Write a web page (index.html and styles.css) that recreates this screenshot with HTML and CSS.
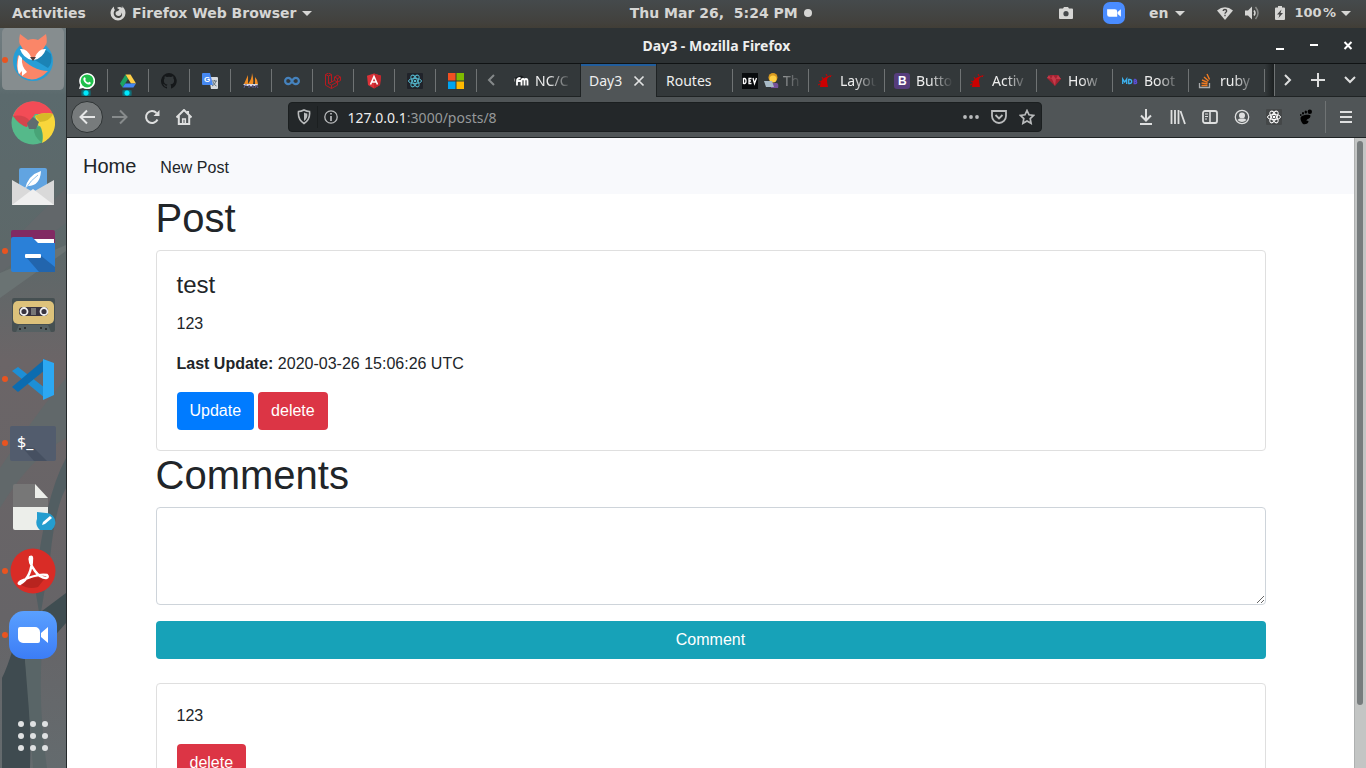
FILE: index.html
```html
<!DOCTYPE html>
<html lang="en">
<head>
<meta charset="utf-8">
<title>Day3</title>
<link rel="stylesheet" href="styles.css">
</head>
<body>
<header class="topbar">
  <div class="topbar-left">
    <button class="top-btn">Activities</button>
    <button class="top-btn app-menu">
      <svg width="16" height="16" viewBox="0 0 16 16"><path d="M4 1.500C2 3 .5 5 .5 8a7.500 7.500 0 0 0 15 0c0-3-1.500-5.500-4-7 .8 1 1 1.500 1 2C10.500 1.500 8 1.500 7 3l2.500 1.500L8 6c-1.500 0-2.500 1-2.500 2.300C5.500 10 7 11 8.500 11c2 0 3.300-1.500 3-3.500 1 1.200.8 3-.3 4.200C9.500 13.500 6 13.300 4.500 11 3 8.500 3.800 6 5 5 4 4 3.800 2.500 4 1.500z" fill="#d6d6d4"/></svg>
      <span>Firefox Web Browser</span><i class="caret"></i>
    </button>
  </div>
  <button class="top-btn clock"><span>Thu Mar 26,&nbsp; 5:24 PM</span><i class="dot"></i></button>
  <div class="topbar-right">
    <svg class="tray-camera" width="14" height="12" viewBox="0 0 14 12"><path d="M1 1.500h3L5 0h4l1 1.500h3q1 0 1 1V11q0 1-1 1H1q-1 0-1-1V2.500q0-1 1-1z" fill="#d6d6d4"/><circle cx="7" cy="6.700" r="2.600" fill="#45484a"/></svg>
    <svg class="tray-zoom" width="22" height="22" viewBox="0 0 48 48"><rect width="48" height="48" rx="15" fill="#4a8cff"/><path d="M9 16h17a5 5 0 0 1 5 5v11H14a5 5 0 0 1-5-5zM32 22l7-6v16l-7-6z" fill="#fff"/></svg>
    <button class="top-btn lang">en<i class="caret"></i></button>
    <button class="top-btn system" aria-label="System menu">
      <svg width="16" height="13" viewBox="0 0 16 13"><path d="M0 3.500Q8-3 16 3.500L8 13z" fill="#d6d6d4"/><path d="M6.200 4c0-2 3.500-2 3.500 0 0 1.200-1.700 1.200-1.700 2.700M8 7.800v1.500" stroke="#444" stroke-width="1.300" fill="none"/></svg>
      <svg class="volume" width="16" height="14" viewBox="0 0 16 14"><path d="M0 4.500h3L7 .5v13l-4-4H0z" fill="#d6d6d4"/><path d="M9 4.500q2 2.500 0 5" stroke="#d6d6d4" stroke-width="1.500" fill="none"/><path d="M10.500 1q5 6 0 12" stroke="#888a88" stroke-width="1.500" fill="none"/></svg>
      <svg width="10" height="14" viewBox="0 0 10 14"><path d="M3 0h4v1.500h2q1 0 1 1V13q0 1-1 1H1q-1 0-1-1V2.500q0-1 1-1h2z" fill="#d6d6d4"/><path d="M6.500 3.500L2 8.500h2.500L3.500 12 8 7H5.500z" fill="#444"/></svg>
      <span class="percent">100&#8202;%</span><i class="caret"></i>
    </button>
  </div>
</header>
<div class="desktop">
  <aside class="dock">
    <svg class="wallpaper" viewBox="0 0 66 740" preserveAspectRatio="none">
      <defs><linearGradient id="wall" x1="0" y1="0" x2="0" y2="1"><stop offset="0" stop-color="#707c80"/><stop offset=".06" stop-color="#697679"/><stop offset=".09" stop-color="#5b6a6d"/><stop offset=".3" stop-color="#5d6869"/><stop offset=".45" stop-color="#6b6567"/><stop offset=".8" stop-color="#666467"/><stop offset="1" stop-color="#646b6e"/></linearGradient></defs>
      <rect width="66" height="740" fill="url(#wall)"/>
      <path d="M66 160L0 225v20l66-50z" fill="#62676a"/><path d="M0 245L66 217v6L0 270z" fill="#6a7373"/>
      <path d="M66 350Q40 380 0 440v40q30-50 66-70z" fill="#61686a"/>
      <path d="M66 430Q44 470 35 560l5 30 10-60q5-50 16-70z" fill="#525e62"/>
      <path d="M42 583L66 565v30L44 620z" fill="#3f4d51"/>
      <path d="M22 585Q12 630 2 650V740h28q2-70-8-130z" fill="#3f4b50"/>
      <path d="M24 620h18q-4 60 5 120H33q-4-60-9-120z" fill="#596567"/>
    </svg>
    <nav class="dock-list">
      <button class="dock-item active running" aria-label="Firefox"><svg width="40" height="48" viewBox="0 0 40 48"><circle cx="20" cy="28" r="20" fill="#279ed6"/><path d="M29 14l9 7q2 9-3 14L20 26z" fill="#1b83b5"/><path d="M5 22Q1 40 10 44q13 7 25-6Q20 38 5 22z" fill="#fa8668"/><path d="M6 22q-3 12 0 19l3-3v5l5-4q-6-6-5-14z" fill="#fff"/><path d="M7 1l8 6q5-2 10 0l8-6q2 9-1 12-4 8-12 14-8-6-12-14Q5 10 7 1z" fill="#fa8668"/><path d="M7 16q7-1 11 8l1 3q-9-2-12-11zM33 16q-7-1-11 8l-1 3q9-2 12-11z" fill="#fff"/><path d="M17 24h6l-3 4z" fill="#543c3a"/></svg></button>
      <button class="dock-item" aria-label="Chrome"><svg width="44" height="44" viewBox="0 0 44 44"><circle cx="22" cy="22" r="21.500" fill="#55b98a"/><path d="M2 15A21.500 21.500 0 0 1 42 13H24L15 26Q8 18 2 15z" fill="#f34c56"/><path d="M42 13A21.500 21.500 0 0 1 31 42q2-10-3-16l-4-11q9-5 18-2z" fill="#f8d63b"/><path d="M2 15q11-2 17 5l-3 6Q8 24 2 15z" fill="#d5444c"/><path d="M24 15q9-5 18-2-3 7-13 8z" fill="#d7b927"/><path d="M31 42q-9-7-8-15l6-2q4 6 2 17z" fill="#48a477"/><path d="M22 16l6 5-3 7h-7l-2-6z" fill="#606c70"/></svg></button>
      <button class="dock-item" aria-label="Mail"><svg width="44" height="38" viewBox="0 0 44 38"><rect x="8" width="28" height="25" rx="2" fill="#61a4e1"/><path d="M14 21q3-14 16-18-1 15-13 15z" fill="#fff"/><path d="M15 20Q20 12 27 7" stroke="#8ec0ea" fill="none"/><path d="M1 12l21 12 21-12v25H1z" fill="#d9d9d9"/><path d="M1 37l21-16 21 16z" fill="#efefef"/></svg></button>
      <button class="dock-item running" aria-label="Files"><svg width="46" height="42" viewBox="0 0 46 42"><rect x="1" width="44" height="22" rx="2" fill="#812a63"/><path d="M20 9h24v6H20z" fill="#fff"/><path d="M1 9q0-2 2-2h19l6 6h17v27q0 2-2 2H3q-2 0-2-2z" fill="#2a80d8"/><path d="M16 27l14-2 15 12v5H29z" fill="#2265ad"/><rect x="15" y="24" width="16" height="4" rx="1" fill="#fff"/></svg></button>
      <button class="dock-item" aria-label="Cassette"><svg width="44" height="34" viewBox="0 0 44 34"><rect x="1" width="43" height="34" rx="2" fill="#465052"/><rect x="2" y="3" width="41" height="23" rx="5" fill="#ddc27b"/><rect x="8" y="9" width="29" height="9" rx="4" fill="#383440"/><path d="M20 10h5v7h-5z" fill="#777"/><circle cx="13" cy="13.500" r="3.500" fill="#383440" stroke="#eee" stroke-width="1.800"/><circle cx="33" cy="13.500" r="3.500" fill="#383440" stroke="#eee" stroke-width="1.800"/><path d="M8 27h29l3 7H5z" fill="#566163"/><g fill="#222"><circle cx="9" cy="31" r="1"/><circle cx="14" cy="30" r="1"/><circle cx="30" cy="30" r="1"/><circle cx="35" cy="31" r="1"/></g></svg></button>
      <button class="dock-item running" aria-label="Visual Studio Code"><svg width="44" height="42" viewBox="0 0 44 42"><path d="M1 13l6-4 27 21v10z" fill="#1d8fd6"/><path d="M1 29l6 5L34 12V1z" fill="#0c6cb0"/><path d="M32 1l11 4v32l-11 5z" fill="#2ca8f3"/></svg></button>
      <button class="dock-item running" aria-label="Terminal"><svg width="46" height="35" viewBox="0 0 46 35"><rect width="46" height="35" rx="2" fill="#525c6d"/><path d="M14 21l10 1 13 13H24L11 20z" fill="#465061"/><text x="7" y="22" class="terminal-glyph">$_</text></svg></button>
      <button class="dock-item" aria-label="Text editor"><svg width="46" height="46" viewBox="0 0 46 46"><path d="M3 2q0-2 2-2h20l13 14v10H3z" fill="#777"/><path d="M25 0v14h13z" fill="#eceeea"/><path d="M3 23h35v21q0 2-2 2H5q-2 0-2-2z" fill="#eceeea"/><path d="M27 28l9 1a9.500 9.500 0 1 1-9 6z" fill="#249dcf"/><path d="M32 41l1-3 7-6 2 2-7 6z" fill="#fff"/></svg></button>
      <button class="dock-item running" aria-label="PDF reader"><svg width="46" height="46" viewBox="0 0 46 46"><circle cx="23" cy="23" r="22.500" fill="#d92c26"/><path d="M10 36l11-6 15-1-8 10q-10 3-18-3z" fill="#b8241f"/><path d="M10 36Q22 29 22 10q0-2-2-1-2 4 5 14 5 7 11 7 3-1 1-3-9-2-26 6-4 3-1 3z" fill="none" stroke="#fff" stroke-width="2.400"/></svg></button>
      <button class="dock-item running" aria-label="Zoom"><svg width="48" height="48" viewBox="0 0 48 48"><defs><linearGradient id="zoom" x2="0" y2="1"><stop stop-color="#5aa0ff"/><stop offset="1" stop-color="#3c7df6"/></linearGradient></defs><rect width="48" height="48" rx="15" fill="url(#zoom)"/><path d="M9 18q0-2 2-2h15a5 5 0 0 1 5 5v9q0 2-2 2H14a5 5 0 0 1-5-5zM32 22l7-6v16l-7-6z" fill="#fff"/></svg></button>
    </nav>
    <button class="dock-item" aria-label="Show applications"><svg width="30" height="30" viewBox="0 0 30 30" fill="#dfe1e2"><circle cx="3" cy="3" r="3"/><circle cx="15" cy="3" r="3"/><circle cx="27" cy="3" r="3"/><circle cx="3" cy="15" r="3"/><circle cx="15" cy="15" r="3"/><circle cx="27" cy="15" r="3"/><circle cx="3" cy="27" r="3"/><circle cx="15" cy="27" r="3"/><circle cx="27" cy="27" r="3"/></svg></button>
  </aside>
  <section class="window">
    <div class="titlebar">
      <strong class="window-title">Day3 - Mozilla Firefox</strong>
      <div class="window-controls">
        <button aria-label="Minimize"><svg width="10" height="10" viewBox="0 0 10 10"><path d="M1 7h8v2H1z" fill="#fff"/></svg></button>
        <button aria-label="Maximize"><svg width="10" height="10" viewBox="0 0 10 10"><path d="M1 3h8v2H1z" fill="#fff"/></svg></button>
        <button aria-label="Close"><svg width="10" height="10" viewBox="0 0 10 10"><path d="M1.500 1l7 7M8.500 1l-7 7" stroke="#fff" stroke-width="2"/></svg></button>
      </div>
    </div>
    <div class="tabstrip">
      <button class="pin notice" aria-label="WhatsApp"><svg width="16" height="16" viewBox="0 0 16 16"><path d="M0 16l1.200-4A8 8 0 1 1 4 14.900z" fill="#fff"/><circle cx="8.100" cy="7.900" r="6.500" fill="#1fc04b"/><path d="M5 4.500c1-1 1.500.5 1.800 1.400L6.200 7q1 2 3 2.800l1-1q2 .7 1.600 1.500C11 12 9 12 7 10.500 4.500 8.500 3.500 6 5 4.500z" fill="#fff"/></svg></button>
      <button class="pin notice" aria-label="Drive"><svg width="16" height="16" viewBox="0 0 16 16"><path d="M5.500 1.500L0 10.500l2.600 4L8 6z" fill="#1da362"/><path d="M5.500 1.500h5L16 10.500h-5z" fill="#ffcf48"/><path d="M5.200 10.500H16l-2.600 4H2.600z" fill="#4286f4"/></svg></button>
      <button class="pin" aria-label="GitHub"><svg width="16" height="16" viewBox="0 0 16 16"><path fill="#15181a" d="M8 0a8 8 0 0 0-2.500 15.600c.4 0 .5-.2.500-.4v-1.500c-2.200.5-2.700-1-2.700-1-.4-.9-.9-1.200-.9-1.200-.7-.5.1-.5.1-.5.800.1 1.200.8 1.200.8.700 1.300 1.900.9 2.300.7.100-.5.300-.9.500-1.100-1.800-.2-3.600-.9-3.600-4 0-.9.300-1.600.8-2.100-.1-.2-.4-1 .1-2.100 0 0 .7-.2 2.200.8a8 8 0 0 1 4 0c1.500-1 2.200-.8 2.200-.8.400 1.100.2 1.900.1 2.100.5.600.8 1.300.8 2.200 0 3.100-1.900 3.700-3.700 3.900.3.300.6.800.6 1.500v2.200c0 .2.100.5.500.4A8 8 0 0 0 8 0z"/></svg></button>
      <button class="pin" aria-label="Translate"><svg width="16" height="16" viewBox="0 0 16 16"><path d="M7 4h8q1 0 1 1v10q0 1-1 1H9z" fill="#d7dadd"/><path d="M10 8h5M12.500 7v1M14 8q-1 4-4 5M11 9q1 3 3.500 4" stroke="#63727c" fill="none"/><path d="M1 0h7l3 12H1q-1 0-1-1V1q0-1 1-1z" fill="#4688f1"/><text x="2" y="9" class="translate-glyph">G</text></svg></button>
      <button class="pin" aria-label="phpMyAdmin"><svg width="16" height="16" viewBox="0 0 16 16"><path d="M5 2L1 11h4zM9 0q2 7 1 11H5Q9 6 9 0zM12 4q3 3 3 7h-3z" fill="#ef8b22"/><path d="M0 11h15l-1 2H2z" fill="#d8d8e0"/><path d="M1 15l1-3h2M6 15v-3l2 2 2-2v3M12 15l1-3 2 3" stroke="#5f5c91" fill="none"/></svg></button>
      <button class="pin" aria-label="Coursera"><svg width="16" height="16" viewBox="0 0 16 16"><path d="M8 8Q6.500 11.200 4.300 11.200a3.200 3.200 0 0 1 0-6.400Q6.500 4.800 8 8t3.700 3.200a3.200 3.200 0 0 0 0-6.400Q9.500 4.800 8 8z" fill="none" stroke="#4582bd" stroke-width="2.200"/></svg></button>
      <button class="pin" aria-label="Laravel"><svg width="16" height="16" viewBox="0 0 16 16"><path d="M.5 1.500L3.500 0l3 1.500v7.500l3-1.700V4l3-1.700 3 1.700v3.500l-3 1.700v3l-6 3.300-6-3.300zM.5 1.500l3 1.500v7.500l3 1.700v3.300M3.500 3l3-1.500M3.500 10.500l3-1.500M6.500 12.200l6-3.200M9.500 4l3 1.700 3-1.700M12.500 5.700v3.500l-3-1.900" fill="none" stroke="#b51b20"/></svg></button>
      <button class="pin" aria-label="Angular"><svg width="16" height="16" viewBox="0 0 16 16"><path d="M8 .5l7 2.300L14 12l-6 3.500L2 12 1 2.800z" fill="#dd3238"/><path d="M8 .5l7 2.300L14 12l-6 3.500z" fill="#c3272e"/><path d="M4.500 11.500L8 3.500l3.500 8M6 9h4" fill="none" stroke="#fff" stroke-width="1.600"/></svg></button>
      <button class="pin" aria-label="React"><svg width="16" height="16" viewBox="0 0 16 16"><rect width="16" height="16" rx="1" fill="#20232a"/><g fill="none" stroke="#54b6cc"><ellipse cx="8" cy="8" rx="6.500" ry="2.600"/><ellipse cx="8" cy="8" rx="6.500" ry="2.600" transform="rotate(60 8 8)"/><ellipse cx="8" cy="8" rx="6.500" ry="2.600" transform="rotate(120 8 8)"/></g><circle cx="8" cy="8" r="1.300" fill="#54b6cc"/></svg></button>
      <button class="pin" aria-label="Microsoft"><svg width="16" height="16" viewBox="0 0 16 16"><path d="M0 0h7.500v7.500H0z" fill="#f25022"/><path d="M8.500 0H16v7.500H8.500z" fill="#7fba00"/><path d="M0 8.500h7.500V16H0z" fill="#00a4ef"/><path d="M8.500 8.500H16V16H8.500z" fill="#ffb900"/></svg></button>
      <button class="scroll-left" aria-label="Scroll tabs left"><svg width="8" height="12" viewBox="0 0 8 12"><path d="M7 1L2 6l5 5" fill="none" stroke="#85898a" stroke-width="2"/></svg></button>
      <div class="tabs">
        <button class="tab no-rule"><svg width="16" height="16" viewBox="0 0 16 16"><path d="M1 5l7-2.500L11 4 6 6z" fill="#171a1c"/><path d="M1.500 5.500v3" stroke="#888" fill="none"/><path d="M4 12.500V8q0-3 3.500-3M4 8h4M8.500 12.500V8q0-2 1.500-2t1.500 2v4.500M11.500 8q0-2 1.500-2t1.500 2v4.500" fill="none" stroke="#fff" stroke-width="1.800"/></svg><span class="tab-label">NC/C</span></button>
        <button class="tab selected"><span class="tab-label full">Day3</span><svg class="tab-close" width="12" height="12" viewBox="0 0 12 12"><path d="M1.500 1.500l9 9M10.500 1.500l-9 9" stroke="#e1e2e2" stroke-width="1.700"/></svg></button>
        <button class="tab"><span class="tab-label full">Routes</span></button>
        <button class="tab"><svg width="16" height="16" viewBox="0 0 16 16"><rect width="16" height="16" fill="#080b0d"/><path d="M1.500 5v6M1.500 5.500h1q1.500 0 1.500 2.500t-1.500 2.500h-1M9.500 5.500H7v5h2.500M7 8h2M11 5l1.500 5.500L14.500 5" fill="none" stroke="#fff" stroke-width="1.300"/></svg><svg class="emoji" width="15" height="15" viewBox="0 0 15 15"><circle cx="9" cy="4.500" r="4.500" fill="#d99a20"/><circle cx="9" cy="6" r="3.500" fill="#ffcf43"/><path d="M6 10h7q2 1 1 5H7z" fill="#75529a"/><path d="M0 8h8l2 6H2z" fill="#a8bac6"/></svg><span class="tab-label late">Th</span></button>
        <button class="tab"><svg width="16" height="16" viewBox="0 0 16 16"><path d="M2 14q0-8 6-10 4-2 7-2-6 2-6 5 0 3 1 7z" fill="#c00"/><path d="M0 12l2-1M1 8l2 1M4 4l1 2M8 1l1 2M12 4l1-1" stroke="#c00"/></svg><span class="tab-label">Layou</span></button>
        <button class="tab"><svg width="16" height="16" viewBox="0 0 16 16"><rect width="16" height="16" rx="3" fill="#563d7c"/><text x="4" y="12" class="bootstrap-glyph">B</text></svg><span class="tab-label">Butto</span></button>
        <button class="tab"><svg width="16" height="16" viewBox="0 0 16 16"><path d="M2 14q0-8 6-10 4-2 7-2-6 2-6 5 0 3 1 7z" fill="#c00"/><path d="M0 12l2-1M1 8l2 1M4 4l1 2M8 1l1 2M12 4l1-1" stroke="#c00"/></svg><span class="tab-label">Activ</span></button>
        <button class="tab"><svg width="16" height="16" viewBox="0 0 16 16"><path d="M1 5l3-3 8 0 3 4-6 7z" fill="#a32231"/><path d="M1 5l5 1 3 7 1-7 5 0-3-4-2 4-3-4-2 4-2-4z" fill="#c53a4a"/></svg><span class="tab-label">How</span></button>
        <button class="tab"><svg width="16" height="16" viewBox="0 0 16 16" fill="none" stroke-width="1.300"><path d="M.7 11V6l2 3 2-3v5M6.700 6.500v4h1q2 0 2-2t-2-2z" stroke="#3db2ef"/><path d="M12.200 6.500v4h1.500q1 0 1-1t-1-1h-1.500M13.500 8.500q1-.3 1-1t-1-1h-1.300" stroke="#5c4ed2"/></svg><span class="tab-label">Boot</span></button>
        <button class="tab"><svg width="16" height="16" viewBox="0 0 16 16"><path d="M1.500 10v4.500h10V10" fill="none" stroke="#a9abac" stroke-width="1.300"/><path d="M3.500 12.500h6M3.500 10l6 .8M4 7l5.700 2.300M6 4l4.500 4M9 1l2.500 5.500" stroke="#ef7b22" stroke-width="1.400"/></svg><span class="tab-label">ruby</span></button>
      </div>
      <div class="tab-tail"></div>
      <div class="tab-actions">
        <button aria-label="Scroll tabs right"><svg width="8" height="12" viewBox="0 0 8 12"><path d="M1 1l5 5-5 5" fill="none" stroke="#dedfdf" stroke-width="2"/></svg></button>
        <button aria-label="New tab"><svg width="14" height="14" viewBox="0 0 14 14"><path d="M7 0v14M0 7h14" stroke="#dedfdf" stroke-width="2"/></svg></button>
        <button aria-label="List tabs"><svg width="12" height="8" viewBox="0 0 12 8"><path d="M1 1l5 5 5-5" fill="none" stroke="#dedfdf" stroke-width="2"/></svg></button>
      </div>
    </div>
    <div class="toolbar">
      <button class="tool back" aria-label="Back"><svg width="16" height="16" viewBox="0 0 16 16"><path d="M16 8H1.500M8 1.500L1.500 8 8 14.500" fill="none" stroke="#e5e6e6" stroke-width="2"/></svg></button>
      <button class="tool" aria-label="Forward"><svg width="16" height="16" viewBox="0 0 16 16"><path d="M0 8h14.500M8 1.500L14.500 8 8 14.500" fill="none" stroke="#878b8c" stroke-width="2"/></svg></button>
      <button class="tool" aria-label="Reload"><svg width="16" height="16" viewBox="0 0 16 16"><path d="M13.500 10.500A6 6 0 1 1 12.500 4" fill="none" stroke="#dedfdf" stroke-width="2"/><path d="M15.500 1v6h-6z" fill="#dedfdf"/></svg></button>
      <button class="tool" aria-label="Home"><svg width="16" height="16" viewBox="0 0 16 16"><path d="M.5 8.500L8 1l7.500 7.500M2.800 7v8h10.400V7M12 2v3" fill="none" stroke="#dedfdf" stroke-width="2"/><path d="M6.700 15v-5h2.600v5" fill="none" stroke="#dedfdf" stroke-width="1.600"/></svg></button>
      <div class="spacer"></div>
      <div class="urlbar">
        <svg width="14" height="16" viewBox="0 0 14 16"><path d="M7 1q3 1.500 5.500 1.500 1 8-5.500 12Q.5 10.500 1.500 2.500 4 2.500 7 1z" fill="none" stroke="#b9bbbc" stroke-width="1.600"/><path d="M7 3.500q1.500.8 3.300 1Q11 9 7 12z" fill="#b9bbbc"/></svg>
        <span class="url-rule"></span>
        <svg width="14" height="14" viewBox="0 0 14 14"><circle cx="7" cy="7" r="6.200" fill="none" stroke="#b9bbbc" stroke-width="1.300"/><path d="M7 3v1.600M7 6v5" stroke="#b9bbbc" stroke-width="1.700"/></svg>
        <span class="url-text"><b>127.0.0.1</b>:3000/posts/8</span>
        <svg width="16" height="16" viewBox="0 0 16 16" fill="#b9bbbc"><circle cx="2" cy="8" r="1.900"/><circle cx="8" cy="8" r="1.900"/><circle cx="14" cy="8" r="1.900"/></svg>
        <svg width="16" height="16" viewBox="0 0 16 16" fill="none" stroke="#b9bbbc" stroke-width="1.800"><path d="M1 2h14v5a7 7 0 0 1-14 0z"/><path d="M4.500 6L8 9.500 11.500 6"/></svg>
        <svg width="16" height="16" viewBox="0 0 16 16" fill="none" stroke="#b9bbbc" stroke-width="1.700"><path d="M8 1.500l2 4.300 4.700.6-3.500 3.200.9 4.700L8 12l-4.100 2.300.9-4.700L1.300 6.400 6 5.800z"/></svg>
      </div>
      <div class="spacer"></div>
      <button class="tool" aria-label="Downloads"><svg width="16" height="16" viewBox="0 0 16 16"><path d="M8 0v11M3 6.500l5 5 5-5M2 15h12" fill="none" stroke="#dedfdf" stroke-width="2"/></svg></button>
      <button class="tool" aria-label="Library"><svg width="16" height="16" viewBox="0 0 16 16"><path d="M1.500 1v14M5 1v14M8.500 1v14M10.500 2L15 15" stroke="#dedfdf" stroke-width="1.800"/></svg></button>
      <button class="tool" aria-label="Sidebars"><svg width="16" height="16" viewBox="0 0 16 16" fill="none" stroke="#dedfdf"><rect x="1" y="2" width="14" height="12" rx="2" stroke-width="1.800"/><path d="M8 2v12" stroke-width="1.600"/><path d="M3 5h3M3 7.500h3M3 10h2"/></svg></button>
      <button class="tool" aria-label="Account"><svg width="16" height="16" viewBox="0 0 16 16"><circle cx="8" cy="8" r="6.700" fill="none" stroke="#dedfdf" stroke-width="1.300"/><circle cx="8" cy="6.500" r="3" fill="#dedfdf"/><path d="M3.500 11q2-2 4.500-1.200 2.500-.8 4.500 1.200Q8 15 3.500 11z" fill="#dedfdf"/></svg></button>
      <button class="tool" aria-label="React tools"><svg width="16" height="16" viewBox="0 0 16 16"><rect width="16" height="16" rx="1" fill="#444748"/><g fill="none" stroke="#fff"><ellipse cx="8" cy="8" rx="6.500" ry="2.600"/><ellipse cx="8" cy="8" rx="6.500" ry="2.600" transform="rotate(60 8 8)"/><ellipse cx="8" cy="8" rx="6.500" ry="2.600" transform="rotate(120 8 8)"/></g><circle cx="8" cy="8" r="1.300" fill="#fff"/></svg></button>
      <button class="tool" aria-label="GNOME extensions"><svg width="16" height="16" viewBox="0 0 16 16"><path d="M12.500 6.500c0 4-4 3-4 5 0 1 2-.5 2 1 0 2-4 4-6 2C2.500 12 1.500 8 4 7c3-1.500 8-1.500 8.500-.5z"/><ellipse cx="11.800" cy="2.700" rx="2.200" ry="2.300"/><ellipse cx="7.800" cy="3" rx="1.200" ry="1.500"/><ellipse cx="5" cy="4.300" rx="1" ry="1.200"/><ellipse cx="2.800" cy="6" rx=".8" ry="1.100"/></svg></button>
      <button class="tool menu" aria-label="Menu"><svg width="12" height="14" viewBox="0 0 12 14"><path d="M0 2h12M0 7h12M0 12h12" stroke="#dedfdf" stroke-width="2"/></svg></button>
    </div>
    <div class="viewport">
      <div class="page">
        <nav class="navbar"><a class="brand" href="#">Home</a><a class="nav-link" href="#">New Post</a></nav>
        <main class="container">
          <h1>Post</h1>
          <article class="card">
            <h2>test</h2>
            <p>123</p>
            <p><strong>Last Update:</strong> 2020-03-26 15:06:26 UTC</p>
            <div class="actions"><button class="btn primary">Update</button><button class="btn danger">delete</button></div>
          </article>
          <h1 id="comments">Comments</h1>
          <form class="comment-form">
            <textarea aria-labelledby="comments"></textarea>
            <button type="button" class="btn info">Comment</button>
          </form>
          <article class="card">
            <p>123</p>
            <div class="actions"><button class="btn danger">delete</button></div>
          </article>
        </main>
      </div>
      <div class="scrollbar"><div class="thumb"></div></div>
    </div>
  </section>
</div>
</body>
</html>
```
FILE: styles.css
```css
* { box-sizing: border-box; }
html, body { height: 100%; margin: 0; }
body { display: flex; flex-direction: column; overflow: hidden; font-family: "Liberation Sans", Arial, sans-serif; font-size: 16px; line-height: 24px; color: #212529; }
button { font: inherit; color: inherit; border: 0; background: none; padding: 0; margin: 0; }
svg { display: block; flex: none; }

/* Desktop top bar */
.topbar { flex: none; display: grid; grid-template-columns: 63fr auto 55fr; height: 28px; padding: 0 15px 2px 12px; background: linear-gradient(#454a4c, #42413d 80%, #413e36); color: #d6d6d4; font: bold 14px/26px "DejaVu Sans", sans-serif; white-space: nowrap; }
.topbar-left, .topbar-right, .top-btn { display: flex; align-items: center; }
.topbar-left { gap: 24px; }
.topbar-right { justify-content: flex-end; }
.app-menu { gap: 6px; }
.caret { border: 5px solid transparent; border-top-color: #d6d6d4; border-bottom: 0; }
.clock { gap: 6px; }
.dot { width: 8px; height: 8px; border-radius: 50%; background: #d6d6d4; }
.tray-zoom { margin-left: 30px; }
.lang { gap: 6px; margin: 0 32px 0 24px; }
.system { gap: 14px; }
.volume { margin-left: -2px; }
.percent { margin: 0 -9px 0 -4px; font-size: 13px; }

.desktop { flex: 1; display: flex; min-height: 0; }

/* Launcher */
.dock { position: relative; flex: none; display: flex; flex-direction: column; justify-content: space-between; width: 66px; overflow: hidden; background: #626b6e; }
.wallpaper { position: absolute; inset: 0; width: 100%; height: 100%; }
.dock-list { display: flex; flex-direction: column; margin-top: -1px; }
.dock-item { position: relative; display: flex; align-items: center; justify-content: center; flex: none; width: 66px; height: 64px; }
.dock-item.active { border: 1px solid transparent; border-width: 1px 2px; background: #868d8f padding-box; border-radius: 6px; }
.dock-item.active svg { margin-bottom: 4px; }
.running::before { content: ""; position: absolute; left: 2px; top: 29px; width: 6px; height: 6px; border-radius: 50%; background: #e95420; }
.dock-item.active::before { left: 0; }
.terminal-glyph { font: 16px "Noto Sans", sans-serif; fill: #fff; }

/* Browser window */
.window { flex: 1; display: flex; flex-direction: column; min-width: 0; border-left: 1px solid #24292b; color: #eee; font-family: "Noto Sans", sans-serif; font-size: 14px; }
.titlebar { flex: none; display: grid; grid-template-columns: 1fr auto 1fr; align-items: center; height: 36px; background: #2d3234; border-bottom: 1px solid #101314; }
.window-title { grid-column: 2; }
.window-controls { display: flex; justify-content: flex-end; gap: 24px; padding-right: 13px; }

.tabstrip { flex: none; display: flex; height: 33px; background: #33383a; border-bottom: 1px solid #1f2324; }
.pin { position: relative; flex: none; display: flex; align-items: center; justify-content: center; width: 41px; padding: 1px 2px 0 0; }
.pin::after, .tab::after { content: ""; position: absolute; right: 0; top: 5px; bottom: 4px; width: 1px; background: #6f7374; }
.notice::before { content: ""; position: absolute; bottom: 0; left: 14px; width: 10px; height: 6px; background: radial-gradient(circle at 5px 3px, #00eaff 2px, #087f8b 3px, transparent 6px); }
.scroll-left { flex: none; display: flex; align-items: center; justify-content: center; width: 27px; }
.tabs { flex: 1; display: flex; min-width: 0; }
.tab { position: relative; flex: 1 1 0; min-width: 0; display: flex; align-items: center; gap: 6px; padding: 1px 0 0 9px; white-space: nowrap; text-align: left; }
.tab-label { flex: 1; min-width: 0; mask-image: linear-gradient(to right, #000 30%, transparent 82%); }
.tab-label.full { mask-image: none; }
.tab-label.late { mask-image: linear-gradient(to right, #0008, transparent 80%); }
.emoji { margin-right: -2px; }
.tab.selected { background: #505557; border: solid #1f2324; border-width: 0 1px; box-shadow: inset 0 2px #215d9c; margin-bottom: -1px; padding-left: 8px; }
.tab.selected::after, .tab.no-rule::after { display: none; }
.tab-close { margin-right: 11px; }
.tab-tail { flex: none; width: 10px; background: linear-gradient(to right, #33383a, #1c2021); border-right: 1px solid #6f7374; }
.tab-actions { flex: none; display: flex; align-items: center; justify-content: space-between; width: 91px; padding: 0 10px 0 9px; }
.bootstrap-glyph { font: bold 12px "Liberation Sans", sans-serif; fill: #fff; }
.translate-glyph { font: bold 8px "Liberation Sans", sans-serif; fill: #fff; }

.toolbar { flex: none; display: flex; align-items: center; height: 41px; padding-left: 4px; background: #505557; border-bottom: 1px solid #1f2324; }
.tool { flex: none; display: flex; align-items: center; justify-content: center; width: 32px; height: 32px; }
.back { border: 1px solid #2f3435; border-radius: 50%; background: #777b7c; margin-right: 1px; }
.spacer { flex: 1 1 87px; }
.urlbar { flex: 9 1 750px; display: flex; align-items: center; gap: 8px; min-width: 0; height: 30px; padding: 0 6px 0 8px; background: #232729; border: 1px solid #1b1f20; border-radius: 4px; }
.urlbar svg + svg { margin-left: 4px; }
.url-rule { width: 1px; height: 22px; background: #1b1f20; margin: 0 -2px; }
.url-text { flex: 1; padding: 1px 0 0 2px; color: #96999a; }
.url-text b { font-weight: normal; color: #eee; }
.menu { width: 41px; margin-left: 3px; border-left: 1px solid #6f7374; }

/* Web page */
.viewport { flex: 1; display: flex; min-height: 0; background: #fff; color: #212529; font-family: "Liberation Sans", Arial, sans-serif; font-size: 16px; }
.page { flex: 1; min-width: 0; overflow: hidden; }
.scrollbar { flex: none; width: 12px; padding: 3px 3px 0 2px; background: #c3c5c4; border-left: 1px solid #aeb0b0; }
.thumb { height: 90%; border-radius: 4px; background: #777c7d; }
.navbar { display: flex; align-items: baseline; gap: 24px; height: 56px; padding: 13px 16px; background: #f8f9fc; }
.navbar a { color: #212529; text-decoration: none; }
.navbar .brand { font-size: 20px; line-height: 30px; }
.container { max-width: 1140px; margin: 0 auto; padding: 0 15px; }
h1 { margin: 0 0 8px; font-size: 40px; line-height: 48px; font-weight: normal; }
.card { padding: 20px; border: 1px solid #dfdfdf; border-radius: 4px; }
.card h2 { margin: 0 0 12px; font-size: 24px; line-height: 1.2; font-weight: normal; }
.card p { margin: 0 0 16px; }
.actions { display: flex; gap: 4px; }
.btn { height: 38px; padding: 0 13px; border-radius: 4px; color: #fff; }
.primary { background: #007bff; }
.danger { background: #dc3545; }
.info { background: #17a2b8; }
.comment-form { display: flex; flex-direction: column; gap: 16px; margin-bottom: 24px; }
textarea { width: 100%; height: 98px; padding: 6px 12px; border: 1px solid #ced4da; border-radius: 4px; font: inherit; resize: vertical; }
```
